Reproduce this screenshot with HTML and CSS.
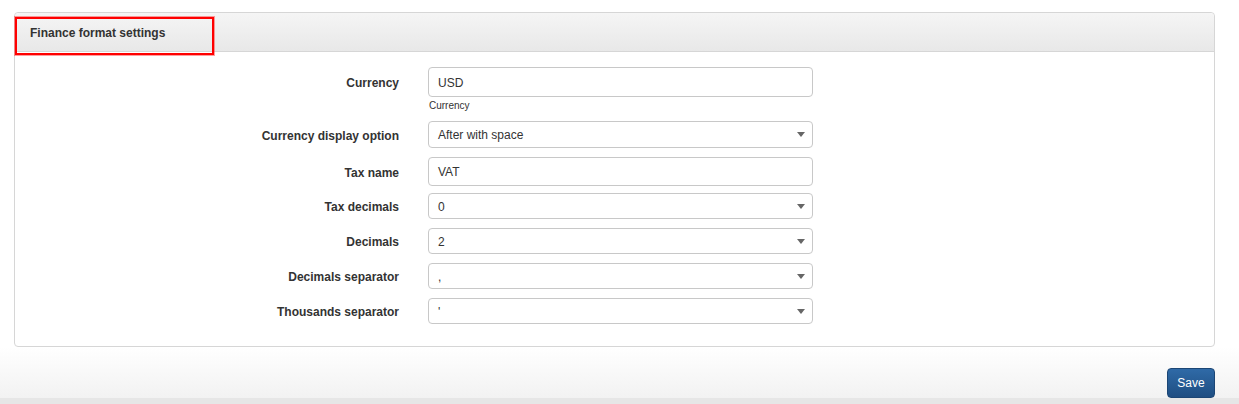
FILE: index.html
```html
<!DOCTYPE html>
<html>
<head>
<meta charset="utf-8">
<link rel="stylesheet" href="styles.css">
</head>
<body>
<div class="page">
  <div class="content">
    <section class="panel">
      <header class="panel-heading">
        <h3 class="panel-title">Finance format settings</h3>
        <span class="highlight"></span>
      </header>
      <div class="panel-body">
        <div class="form-row row-currency">
          <label class="ctrl-label h30">Currency</label>
          <div class="ctrl">
            <div class="input h30">USD</div>
            <div class="help">Currency</div>
          </div>
        </div>
        <div class="form-row">
          <label class="ctrl-label h27">Currency display option</label>
          <div class="ctrl">
            <div class="select h27"><span>After with space</span><svg class="caret" width="8" height="5" viewBox="0 0 8 5"><path d="M0 0H8L4 5Z" fill="#666"/></svg></div>
          </div>
        </div>
        <div class="form-row row-tight">
          <label class="ctrl-label h29">Tax name</label>
          <div class="ctrl">
            <div class="input h29">VAT</div>
          </div>
        </div>
        <div class="form-row">
          <label class="ctrl-label h26">Tax decimals</label>
          <div class="ctrl">
            <div class="select h26"><span>0</span><svg class="caret" width="8" height="5" viewBox="0 0 8 5"><path d="M0 0H8L4 5Z" fill="#666"/></svg></div>
          </div>
        </div>
        <div class="form-row">
          <label class="ctrl-label h26">Decimals</label>
          <div class="ctrl">
            <div class="select h26"><span>2</span><svg class="caret" width="8" height="5" viewBox="0 0 8 5"><path d="M0 0H8L4 5Z" fill="#666"/></svg></div>
          </div>
        </div>
        <div class="form-row">
          <label class="ctrl-label h26">Decimals separator</label>
          <div class="ctrl">
            <div class="select h26"><span>,</span><svg class="caret" width="8" height="5" viewBox="0 0 8 5"><path d="M0 0H8L4 5Z" fill="#666"/></svg></div>
          </div>
        </div>
        <div class="form-row last">
          <label class="ctrl-label h26">Thousands separator</label>
          <div class="ctrl">
            <div class="select h26"><span>'</span><svg class="caret" width="8" height="5" viewBox="0 0 8 5"><path d="M0 0H8L4 5Z" fill="#666"/></svg></div>
          </div>
        </div>
      </div>
    </section>
  </div>
  <footer class="actions">
    <button class="btn-primary" type="button">Save</button>
  </footer>
  <div class="bottom-strip"></div>
</div>
</body>
</html>
```

FILE: styles.css
```css
* { box-sizing: border-box; }
html, body { margin: 0; padding: 0; background: #fff; }
body {
  font-family: "Liberation Sans", Arial, Helvetica, sans-serif;
  font-size: 12px;
  color: #333;
}
.page { display: flex; flex-direction: column; min-height: 404px; }
.content { padding: 12px 24px 0 14px; }

.panel {
  border: 1px solid #d6d6d6;
  border-radius: 4px;
  background: #fff;
}
.panel-heading {
  position: relative;
  height: 39px;
  display: flex;
  align-items: center;
  padding: 0 0 0 15px;
  background: linear-gradient(#f5f5f5, #e8e8e8);
  border-bottom: 1px solid #d6d6d6;
  border-radius: 4px 4px 0 0;
}
.panel-title {
  margin: 0;
  font-size: 12px;
  font-weight: bold;
  color: #333;
  padding-top: 1px;
}
.highlight {
  position: absolute;
  left: 0;
  top: 4px;
  width: 199px;
  height: 38px;
  border: 2px solid #ff0000;
  box-shadow: 0 0 0 1px rgba(255, 40, 40, 0.45);
}

.panel-body { padding: 15px 0 22px 0; }
.form-row {
  display: grid;
  grid-template-columns: 384px 385px;
  column-gap: 29px;
  margin-bottom: 9px;
}
.form-row.row-tight { margin-bottom: 7px; }
.form-row.last { margin-bottom: 0; }

.ctrl-label {
  display: flex;
  align-items: center;
  justify-content: flex-end;
  padding-top: 2px;
  font-weight: bold;
  color: #333;
}
.h30 { height: 30px; }
.h29 { height: 29px; }
.h27 { height: 27px; }
.h26 { height: 26px; }

.input, .select {
  display: flex;
  align-items: center;
  border: 1px solid #c8c8c8;
  border-radius: 4px;
  padding: 1px 9px 0 9px;
  background: #fff;
  color: #333;
  font-size: 12px;
}
.select { justify-content: space-between; padding-right: 7px; }
.caret { display: block; margin-top: -1px; }
.help {
  height: 15px;
  padding-top: 3px;
  padding-left: 1px;
  font-size: 10px;
  line-height: 12px;
  color: #333;
}

.actions {
  flex: 1;
  display: flex;
  justify-content: flex-end;
  align-items: flex-end;
  padding: 20px 24px 0 0;
  background: linear-gradient(#ffffff, #f2f2f2);
}
.btn-primary {
  width: 48px;
  height: 30px;
  border: 1px solid #1c4675;
  border-radius: 4px;
  background: linear-gradient(#2f6aa7, #1f4e82);
  color: #fff;
  font-family: "Liberation Sans", Arial, sans-serif;
  font-size: 12px;
  padding: 0;
}
.bottom-strip { height: 6px; background: #e6e6e6; }
```
